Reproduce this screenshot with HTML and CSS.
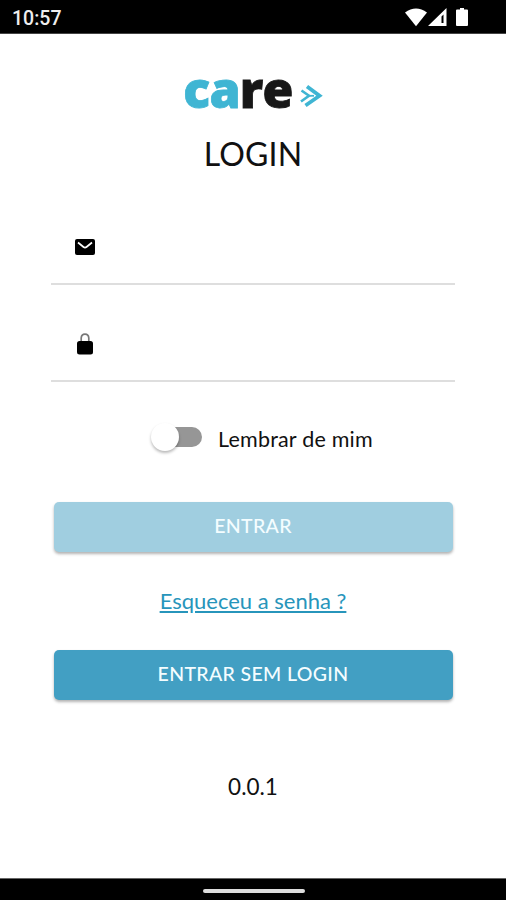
FILE: index.html
```html
<!DOCTYPE html>
<html lang="pt">
<head>
<meta charset="utf-8">
<title>Login</title>
<link rel="stylesheet" href="styles.css">
</head>
<body>
<header class="status">
  <span class="clock">10:57</span>
  <svg class="status-icons" width="64" height="20" viewBox="0 0 64 20" fill="#fff">
    <path d="M0 4.500Q11-3.500 22 4.500L11 18.200Z"/>
    <path fill-rule="evenodd" d="M23 18 41.500 0V18ZM36.500 8.500V15H38.500V6.500Z"/>
    <path d="M55 0h4v1.500h3q1 0 1 1V17q0 1-1 1h-10q-1 0-1-1V2.500q0-1 1-1H55Z"/>
  </svg>
</header>
<main class="screen">
  <div class="logo">
    <span class="logo-word"><span class="logo-blue">ca</span>re</span>
    <svg class="logo-arrow" width="24" height="24" viewBox="0 0 24 24" fill="none" stroke="#3fb5d3">
      <path stroke-width="3.800" d="M7 2.500 19.500 11.800 5.500 21.500"/>
      <path stroke-width="2.600" d="M1.500 6.500 9 11.800 1 17.500"/>
      <path stroke-width="1.800" d="M9 11.800H14"/>
    </svg>
  </div>
  <h1 class="title">LOGIN</h1>
  <div class="field field-mail">
    <svg width="20" height="16" viewBox="0 0 20 16"><rect width="20" height="16" rx="2"/><path d="M3 3.500 8.500 8Q10 9.200 11.500 8L17 3.500" fill="none" stroke="#fff" stroke-width="1.700"/></svg>
  </div>
  <div class="field field-lock">
    <svg width="16" height="22" viewBox="0 0 16 22"><rect y="8" width="16" height="13.500" rx="2.500"/><path d="M4.200 8V5Q4.500 1.200 8 1.200T11.800 5V8" fill="none" stroke="#777" stroke-width="1.700"/></svg>
  </div>
  <div class="remember">
    <span class="switch"><span class="knob"></span></span>
    <span class="remember-label">Lembrar de mim</span>
  </div>
  <button class="button button-muted">ENTRAR</button>
  <a class="forgot">Esqueceu a senha ?</a>
  <button class="button">ENTRAR SEM LOGIN</button>
  <div class="version">0.0.1</div>
</main>
<footer class="navbar"><span class="handle"></span></footer>
</body>
</html>
```
FILE: styles.css
```css
* { box-sizing: border-box; }
body {
  margin: 0;
  height: 900px;
  display: flex;
  flex-direction: column;
  background: #fff;
  color: #111;
  font-family: Lato, sans-serif;
  overflow: hidden;
}
.status {
  height: 34px;
  flex: none;
  display: flex;
  justify-content: space-between;
  padding: 8px 37px 0 12px;
  background: #000;
  color: #eee;
  border-bottom: 1px solid #444;
}
.clock { font: 500 19.5px/21px Roboto, sans-serif; }
.screen {
  flex: 1;
  display: flex;
  flex-direction: column;
  align-items: center;
}
.logo {
  display: flex;
  height: 56px;
  margin-top: 27px;
  padding-left: 1px;
}
.logo-word {
  font: 800 50px/56px "Open Sans", sans-serif;
  letter-spacing: -0.7px;
  color: #171717;
  -webkit-text-stroke: 0.8px currentColor;
}
.logo-blue { color: #3fb5d3; }
.logo-arrow { margin: 23px 0 0 7px; }
.title {
  margin: 17px 0 0;
  font-size: 32px;
  line-height: 40px;
  font-weight: 400;
  letter-spacing: 0.2px;
}
.field {
  width: 404px;
  border-bottom: 2px solid #dedede;
  display: flex;
  align-items: flex-start;
}
.field-mail { height: 111px; padding: 65px 0 0 24px; }
.field-lock { height: 97px; padding: 48px 0 0 26px; }
.remember {
  width: 224px;
  height: 36px;
  margin: 37px 0 0 20px;
  display: flex;
  align-items: center;
}
.switch {
  width: 48px;
  height: 20px;
  margin-left: 3px;
  margin-bottom: 1px;
  border-radius: 10px;
  background: #969696;
  display: flex;
  align-items: center;
}
.knob {
  flex: none;
  width: 28px;
  height: 28px;
  margin-left: -3px;
  border-radius: 50%;
  background: #fff;
  box-shadow: 0 2px 3px rgba(0, 0, 0, .28);
}
.remember-label {
  margin: 3px 0 0 16px;
  font-size: 21.5px;
  letter-spacing: 0.2px;
  white-space: nowrap;
}
.button {
  width: 399px;
  height: 50px;
  padding: 0 0 2px;
  border: 0;
  border-radius: 5px;
  background: #429fc3;
  color: #f4fdff;
  font: 500 19.5px/48px Lato, sans-serif;
  letter-spacing: 0.35px;
  box-shadow: 0 2px 3px rgba(0, 0, 0, .3);
}
.button-muted { margin-top: 47px; background: #a0cee0; }
.forgot {
  margin: 35px 0;
  font-size: 22px;
  line-height: 28px;
  color: #2795bb;
  text-decoration: underline;
}
.version { margin-top: 73px; font-size: 22.5px; line-height: 28px; }
.navbar {
  height: 22px;
  flex: none;
  display: flex;
  justify-content: center;
  padding-top: 10px;
  background: #000;
  border-top: 1px solid #666;
}
.handle { width: 102px; height: 4px; margin-left: 1px; border-radius: 2px; background: #ddd; }
```
